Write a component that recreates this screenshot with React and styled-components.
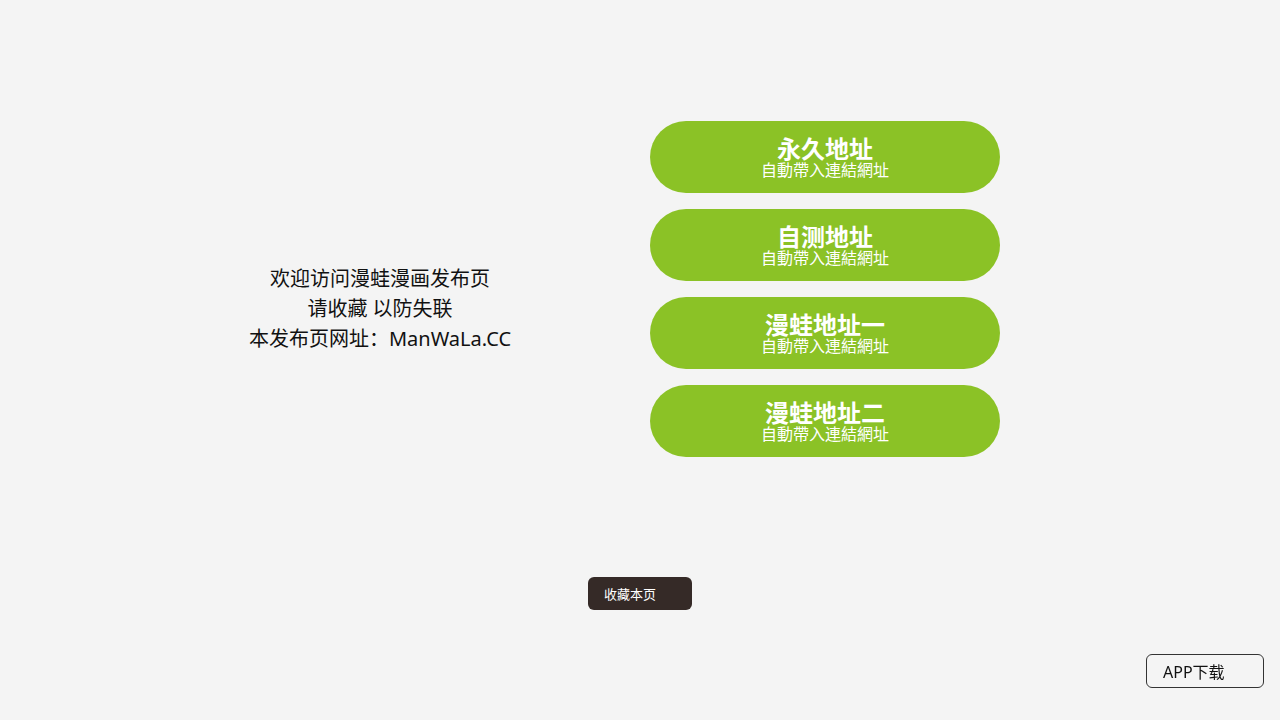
import styled, { createGlobalStyle } from 'styled-components';

const GlobalStyle = createGlobalStyle`
    html, body {
        margin: 0;
        padding: 0;
        background: #f4f4f4;
        font-family: "Noto Sans", "Noto Sans CJK SC", sans-serif;
    }
`;

const links = [
    { title: '永久地址', sub: '自動帶入連結網址' },
    { title: '自测地址', sub: '自動帶入連結網址' },
    { title: '漫蛙地址一', sub: '自動帶入連結網址' },
    { title: '漫蛙地址二', sub: '自動帶入連結網址' },
];

const App = () => {
    return (
        <>
            <GlobalStyle />
            <Page>
                <Main>
                    <Intro>
                        <p>欢迎访问漫蛙漫画发布页</p>
                        <p>请收藏 以防失联</p>
                        <p>本发布页网址：ManWaLa.CC</p>
                    </Intro>
                    <LinkList>
                        {links.map((l) => (
                            <LinkButton key={l.title} href="#">
                                <strong>{l.title}</strong>
                                <span>{l.sub}</span>
                            </LinkButton>
                        ))}
                    </LinkList>
                </Main>
                <Footer>
                    <BookmarkButton>收藏本页</BookmarkButton>
                </Footer>
                <AppButton>APP下载</AppButton>
            </Page>
        </>
    );
};

const Page = styled.div`
    width: 1280px;
    height: 720px;
    box-sizing: border-box;
    padding-top: 121px;
`;

const Main = styled.div`
    display: flex;
    align-items: flex-start;
    padding-left: 240px;
    gap: 130px;
`;

const Intro = styled.div`
    width: 280px;
    margin-top: 143px;
    text-align: center;
    color: #111;

    p {
        margin: 0;
        font-size: 20px;
        line-height: 30px;
        white-space: nowrap;
    }
`;

const LinkList = styled.div`
    display: flex;
    flex-direction: column;
    gap: 16px;
    width: 350px;
`;

const LinkButton = styled.a`
    height: 72px;
    border-radius: 36px;
    background: #8bc226;
    color: #fff;
    text-decoration: none;
    display: flex;
    flex-direction: column;
    align-items: center;
    justify-content: center;
    padding-top: 2px;
    box-sizing: border-box;

    strong {
        font-size: 24px;
        line-height: 24px;
        font-weight: 700;
    }

    span {
        font-size: 16px;
        line-height: 18px;
    }
`;

const Footer = styled.div`
    display: flex;
    padding-left: 588px;
    margin-top: 120px;
`;

const BookmarkButton = styled.button`
    width: 104px;
    height: 33px;
    border: none;
    border-radius: 6px;
    background: #352a27;
    color: #fff;
    font-family: "Noto Sans", "Noto Sans CJK SC", sans-serif;
    font-size: 13px;
    text-align: left;
    padding: 0 16px;
    cursor: pointer;
`;

const AppButton = styled.button`
    position: fixed;
    right: 16px;
    bottom: 32px;
    width: 118px;
    height: 34px;
    border: 1px solid #333;
    border-radius: 6px;
    background: transparent;
    color: #111;
    font-family: "Noto Sans", "Noto Sans CJK SC", sans-serif;
    font-size: 16px;
    text-align: left;
    padding: 0 16px;
    cursor: pointer;
`;

export default App;
